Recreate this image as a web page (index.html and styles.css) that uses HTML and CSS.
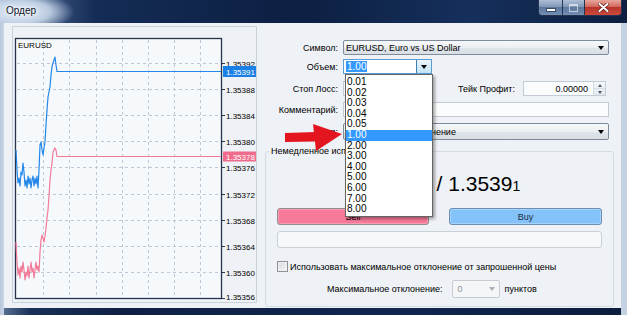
FILE: index.html
```html
<!DOCTYPE html>
<html lang="ru">
<head>
<meta charset="utf-8">
<title>Ордер</title>
<link rel="stylesheet" href="styles.css">
</head>
<body>
<div class="window">
  <div class="titlebar">
    <div class="title">Ордер</div>
    <div class="caption-buttons">
      <div class="cb cb-min"><span class="min-glyph"></span></div>
      <div class="cb cb-max"><span class="max-glyph"></span></div>
      <div class="cb cb-close">
        <svg width="11" height="9" viewBox="0 0 11 9"><path d="M1.5 1 L9.5 8 M9.5 1 L1.5 8" stroke="#5a1a16" stroke-width="3.4" stroke-linecap="round"/><path d="M1.5 1 L9.5 8 M9.5 1 L1.5 8" stroke="#fff" stroke-width="2" stroke-linecap="round"/></svg>
      </div>
    </div>
  </div>
  <div class="frame">
    <div class="client">
      <div class="chart-pane">
        <svg class="chart" width="243" height="275" viewBox="13 27 243 275">
          <rect x="15.5" y="38.5" width="206" height="260" fill="#f6f9fc" stroke="#27344d" stroke-width="1.3"/>
          <g stroke="#bccad8" stroke-width="1" stroke-dasharray="3 3">
            <line x1="43.5" y1="40" x2="43.5" y2="298"/>
            <line x1="69.5" y1="40" x2="69.5" y2="298"/>
            <line x1="96.5" y1="40" x2="96.5" y2="298"/>
            <line x1="122.5" y1="40" x2="122.5" y2="298"/>
            <line x1="148.5" y1="40" x2="148.5" y2="298"/>
            <line x1="174.5" y1="40" x2="174.5" y2="298"/>
            <line x1="200.5" y1="40" x2="200.5" y2="298"/>
            <line x1="17" y1="63.5" x2="221" y2="63.5"/>
            <line x1="17" y1="89.5" x2="221" y2="89.5"/>
            <line x1="17" y1="115.5" x2="221" y2="115.5"/>
            <line x1="17" y1="141.5" x2="221" y2="141.5"/>
            <line x1="17" y1="167.5" x2="221" y2="167.5"/>
            <line x1="17" y1="194.5" x2="221" y2="194.5"/>
            <line x1="17" y1="220.5" x2="221" y2="220.5"/>
            <line x1="17" y1="246.5" x2="221" y2="246.5"/>
            <line x1="17" y1="272.5" x2="221" y2="272.5"/>
          </g>
          <g stroke="#27344d" stroke-width="1">
            <line x1="221" y1="63.5" x2="225" y2="63.5"/>
            <line x1="221" y1="89.5" x2="225" y2="89.5"/>
            <line x1="221" y1="115.5" x2="225" y2="115.5"/>
            <line x1="221" y1="141.5" x2="225" y2="141.5"/>
            <line x1="221" y1="167.5" x2="225" y2="167.5"/>
            <line x1="221" y1="194.5" x2="225" y2="194.5"/>
            <line x1="221" y1="220.5" x2="225" y2="220.5"/>
            <line x1="221" y1="246.5" x2="225" y2="246.5"/>
            <line x1="221" y1="272.5" x2="225" y2="272.5"/>
            <line x1="221" y1="298.5" x2="225" y2="298.5"/>
          </g>
          <text x="18" y="48" class="chart-sym">EURUSD</text>
          <g class="axis">
            <text x="226" y="66.5">1.35392</text>
            <text x="226" y="92.5">1.35388</text>
            <text x="226" y="118.5">1.35384</text>
            <text x="226" y="144.5">1.35380</text>
            <text x="226" y="170.5">1.35376</text>
            <text x="226" y="197.5">1.35372</text>
            <text x="226" y="223.5">1.35368</text>
            <text x="226" y="249.5">1.35364</text>
            <text x="226" y="275.5">1.35360</text>
            <text x="226" y="300">1.35356</text>
          </g>
          <polyline fill="none" stroke="#f27a99" stroke-width="1.2" stroke-linejoin="round" points="16,242 17,262 18,275 19,268 20,278 21,266 22,272 23,262 24,270 25,280 26,272 27,276 28,266 29,278 30,270 31,262 32,272 33,268 34,278 35,270 36,262 37,270 38,266 39,272 40,252 41,240 42,235 43,238 44,242 45,236 46,228 47,218 48,210 49,196 50,180 51,170 52,163 53,152 54,150 55,148 56,150 57,156.5 221,156.5"/>
          <polyline fill="none" stroke="#2387ea" stroke-width="1.2" stroke-linejoin="round" points="16,150 17,170 18,183 19,178 20,186 21,172 22,175 23,163 24,172 25,186 26,180 27,188 28,176 29,184 30,178 31,188 32,180 33,176 34,186 35,178 36,184 37,176 38,188 39,170 40,145 41,142 42,150 43,155 44,148 45,142 46,125 47,110 48,97 49,92 50,87 51,75 52,67 53,63 54,60 55,57 56,65 57,71.5 221,71.5"/>
          <rect x="223" y="66" width="33" height="11" fill="#1a7fe6"/>
          <text x="226" y="74.5" class="tag">1.35391</text>
          <rect x="223" y="151.5" width="33" height="10" fill="#f06c8c"/>
          <text x="226" y="159.5" class="tag">1.35378</text>
        </svg>
      </div>

      <div class="form">
        <div class="row r1">
          <span class="lbl">Символ:</span>
          <div class="combo combo-wide"><span>EURUSD, Euro vs US Dollar</span><i class="arrow"></i></div>
        </div>
        <div class="row r2">
          <span class="lbl">Объем:</span>
          <div class="edit-combo">
            <span class="sel">1.00</span>
            <div class="dd-btn"><i class="arrow"></i></div>
            <div class="dropdown">
              <div>0.01</div><div>0.02</div><div>0.03</div><div>0.04</div><div>0.05</div>
              <div class="on">1.00</div>
              <div>2.00</div><div>3.00</div><div>4.00</div><div>5.00</div><div>6.00</div><div>7.00</div><div>8.00</div>
            </div>
          </div>
        </div>
        <div class="row r3">
          <span class="lbl">Стоп Лосс:</span>
          <div class="spin-input"><span class="val">0.00000</span><div class="spin"><i class="up"></i><i class="down"></i></div></div>
          <span class="lbl2">Тейк Профит:</span>
          <div class="spin-input"><span class="val">0.00000</span><div class="spin"><i class="up"></i><i class="down"></i></div></div>
        </div>
        <div class="row r4">
          <span class="lbl">Комментарий:</span>
          <div class="input comment"></div>
        </div>
        <div class="row r5">
          <span class="lbl">Тип:</span>
          <div class="combo combo-wide combo-type"><span>Немедленное исполнение</span><i class="arrow"></i></div>
        </div>

        <fieldset class="group">
          <legend>Немедленное исполнение</legend>
          <div class="group-body">
            <div class="prices"><span>1.3537<small>8</small></span> / <span>1.3539<small>1</small></span></div>
            <div class="trade-buttons">
              <div class="btn sell">Sell</div>
              <div class="btn buy">Buy</div>
            </div>
            <div class="bar"></div>
            <div class="check-row"><span class="checkbox"></span><span>Использовать максимальное отклонение от запрошенной цены</span></div>
            <div class="dev-row">
              <span>Максимальное отклонение:</span>
              <div class="dev-combo"><span>0</span><i class="arrow gray"></i></div>
              <span>пунктов</span>
            </div>
          </div>
        </fieldset>

        <svg class="red-arrow" width="58" height="29" viewBox="0 0 58 29">
          <polygon points="0,10 31,9 31,18.5 0,19" fill="#e3151e"/>
          <polygon points="28,1 57,11 31,28" fill="#e3151e"/>
        </svg>
      </div>
    </div>
  </div>
</div>
</body>
</html>
```

FILE: styles.css
```css
* { box-sizing: border-box; margin: 0; padding: 0; }

html, body {
  width: 627px;
  height: 315px;
  overflow: hidden;
}

body {
  font-family: "Liberation Sans", Arial, sans-serif;
  font-size: 9px;
  color: #000;
  background: #0c1a36;
}

.window {
  width: 627px;
  height: 315px;
  display: flex;
  flex-direction: column;
  background: linear-gradient(90deg, #5f7898 0, #1a3058 30px, #0e2044 120px, #102650 400px, #0c1c3c 627px);
}

/* ---------- title bar ---------- */
.titlebar {
  height: 23px;
  display: flex;
  align-items: flex-start;
  background:
    radial-gradient(ellipse 52px 20px at 22px 12px, rgba(236, 243, 251, 0.98) 0, rgba(205, 220, 238, 0.85) 55%, rgba(120, 150, 190, 0) 100%),
    linear-gradient(90deg, #9fb3cd 0, #3a5580 50px, #142c56 95px, #0d1f42 300px, #15305c 470px, #0d1f40 627px);
}

.title {
  flex: 1;
  padding: 5px 0 0 6px;
  font-size: 10px;
  color: #0b1328;
  text-shadow: 0 0 4px #fff, 0 0 2px #fff;
}

.caption-buttons {
  display: flex;
  margin-right: 5px;
  height: 16px;
}

.cb {
  height: 16px;
  border: 1px solid #24344f;
  border-top: none;
  display: flex;
  align-items: center;
  justify-content: center;
}

.cb-min {
  width: 24px;
  border-right: none;
  border-radius: 0 0 0 4px;
  background: linear-gradient(#aebfd6, #8298b8 45%, #5d779d 50%, #7590b4);
}

.cb-max {
  width: 22px;
  border-right: none;
  background: linear-gradient(#aebfd6, #8298b8 45%, #5d779d 50%, #7590b4);
}

.cb-close {
  width: 38px;
  border-radius: 0 0 4px 0;
  background: linear-gradient(#e7a69d, #d2665c 45%, #b9342a 50%, #cc4a3e);
}

.min-glyph {
  width: 10px;
  height: 4px;
  margin-top: 5px;
  background: #fff;
  border: 1px solid #3a4d68;
}

.max-glyph {
  width: 9px;
  height: 8px;
  border: 1px solid rgba(255, 255, 255, 0.6);
  border-top-width: 2px;
}

/* ---------- frame ---------- */
.frame {
  flex: 1;
  display: flex;
  padding: 0 6px 7px 4px;
  background: linear-gradient(90deg, #b7c8dc 0, #c9d6e5 4px, transparent 4px, transparent 621px, #c3d1e1 621px);
}

.client {
  flex: 1;
  display: flex;
  align-items: flex-start;
  padding: 3px 0 0 8px;
  background: #eef1f5;
}

/* ---------- chart ---------- */
.chart-pane {
  width: 245px;
  height: 277px;
  border: 1px solid #c9d1da;
  flex: none;
}

.chart {
  display: block;
  font-family: "Liberation Sans", Arial, sans-serif;
}

.chart-sym { font-size: 8px; fill: #000; }
.axis text { font-size: 8px; fill: #000; }
.tag { font-size: 8px; fill: #fff; }

/* ---------- form ---------- */
.form {
  flex: 1;
  align-self: stretch;
  position: relative;
  display: flex;
  flex-direction: column;
}

.row {
  display: flex;
  align-items: center;
  height: 15px;
}

.r1 { margin-top: 14px; }
.r2 { margin-top: 4px; }
.r3 { margin-top: 7px; }
.r4 { margin-top: 6px; }
.r5 { margin-top: 6px; height: 17px; }

.lbl {
  width: 81px;
  margin-right: 5px;
  text-align: right;
  flex: none;
}

.lbl2 {
  width: 89px;
  margin-right: 8px;
  text-align: right;
  flex: none;
}

.combo {
  height: 15px;
  display: flex;
  align-items: center;
  padding-left: 2px;
  border: 1px solid #7d8b9c;
  border-radius: 2px;
  background: linear-gradient(#f7f8fa, #eceff3 50%, #e0e5eb 51%, #d9dee5);
}

.combo-wide { width: 266px; }
.combo-type { height: 17px; }

.arrow {
  display: block;
  width: 0;
  height: 0;
  margin-left: auto;
  margin-right: 4px;
  border-left: 3.5px solid transparent;
  border-right: 3.5px solid transparent;
  border-top: 4px solid #000;
}

.arrow.gray { border-top-color: #a8b0b8; }

.edit-combo {
  position: relative;
  width: 89px;
  height: 15px;
  display: flex;
  align-items: center;
  border: 1px solid #5b9bd5;
  background: #fff;
}

.sel {
  margin-left: 2px;
  padding: 0 1px;
  font-size: 10px;
  line-height: 11px;
  color: #fff;
  background: #3399ff;
}

.dd-btn {
  margin-left: auto;
  width: 15px;
  height: 100%;
  display: flex;
  align-items: center;
  border-left: 1px solid #3c7fb1;
  background: linear-gradient(#eaf6fd, #c3e4f6);
}

.dd-btn .arrow { margin: 0 auto; }

.dropdown {
  position: absolute;
  top: 14px;
  left: 1px;
  width: 88px;
  z-index: 5;
  padding: 2px 0 1px;
  background: #fff;
  border: 1px solid #646464;
  box-shadow: 2px 2px 3px rgba(0, 0, 0, 0.35);
}

.dropdown div {
  height: 10.6px;
  line-height: 10.6px;
  padding-left: 1px;
  font-size: 10px;
}

.dropdown .on {
  color: #fff;
  background: #3399ff;
}

.spin-input {
  width: 83px;
  height: 15px;
  display: flex;
  align-items: center;
  border: 1px solid #c3ccd6;
  background: #fbfcfd;
}

.spin-input .val {
  flex: 1;
  text-align: right;
  padding-right: 5px;
}

.spin {
  width: 12px;
  height: 100%;
  display: flex;
  flex-direction: column;
  border-left: 1px solid #d4dce4;
  background: linear-gradient(#f6f8fa, #e3e8ee);
}

.spin i {
  flex: 1;
  display: flex;
  align-items: center;
  justify-content: center;
}

.spin i::before {
  content: "";
  width: 0;
  height: 0;
  border-left: 2.5px solid transparent;
  border-right: 2.5px solid transparent;
}

.spin .up::before { border-bottom: 3px solid #4a5a6c; }
.spin .down::before { border-top: 3px solid #4a5a6c; }
.spin .up { border-bottom: 1px solid #d4dce4; }

.input {
  height: 15px;
  border: 1px solid #c3ccd6;
  background: #fbfcfd;
}

.comment { width: 266px; }

/* ---------- group ---------- */
.group {
  margin: 6px 7px 0 8px;
  border: 1px solid #d3dce5;
  border-radius: 3px;
  padding: 0;
}

.group legend {
  margin-left: 3px;
  padding: 0 2px;
  line-height: 11px;
  font-size: 9px;
}

.group-body {
  padding: 0 11px 8px;
  display: flex;
  flex-direction: column;
}

.prices {
  margin-top: 15px;
  height: 24px;
  line-height: 24px;
  text-align: center;
  font-size: 21px;
  color: #000;
  white-space: nowrap;
}

.prices small { font-size: 14px; }

.trade-buttons {
  margin-top: 12px;
  display: flex;
  gap: 20px;
}

.btn {
  height: 17px;
  display: flex;
  align-items: center;
  justify-content: center;
  border-radius: 3px;
  font-size: 9px;
}

.sell {
  width: 152px;
  border: 1px solid #8e8e8e;
  background: #f87a9a;
  box-shadow: inset 0 0 0 1px #fb9ab3;
}

.buy {
  width: 153px;
  border: 1px solid #6d8db3;
  background: #84c2fa;
  box-shadow: inset 0 0 0 1px #a4d3fc;
  color: #1a2a40;
}

.bar {
  margin-top: 6px;
  height: 17px;
  width: 325px;
  border: 1px solid #c8d0d8;
  border-radius: 3px;
  background: #f6f8fa;
}

.check-row {
  margin-top: 13px;
  height: 11px;
  display: flex;
  align-items: center;
}

.checkbox {
  width: 11px;
  height: 11px;
  margin-right: 2px;
  border: 1px solid #8f9296;
  background: linear-gradient(135deg, #d6d9dd, #f6f7f8);
  box-shadow: inset 0 0 0 1px #eef0f2;
}

.dev-row {
  margin-top: 8px;
  height: 18px;
  display: flex;
  align-items: center;
  padding-left: 50px;
}

.dev-combo {
  width: 48px;
  height: 18px;
  margin: 0 5px 0 9px;
  display: flex;
  align-items: center;
  padding-left: 5px;
  border: 1px solid #c5ccd4;
  border-radius: 2px;
  background: #f4f6f8;
  color: #8d949b;
}

/* ---------- red pointer ---------- */
.red-arrow {
  position: absolute;
  left: 28px;
  top: 97px;
  z-index: 6;
}
```
